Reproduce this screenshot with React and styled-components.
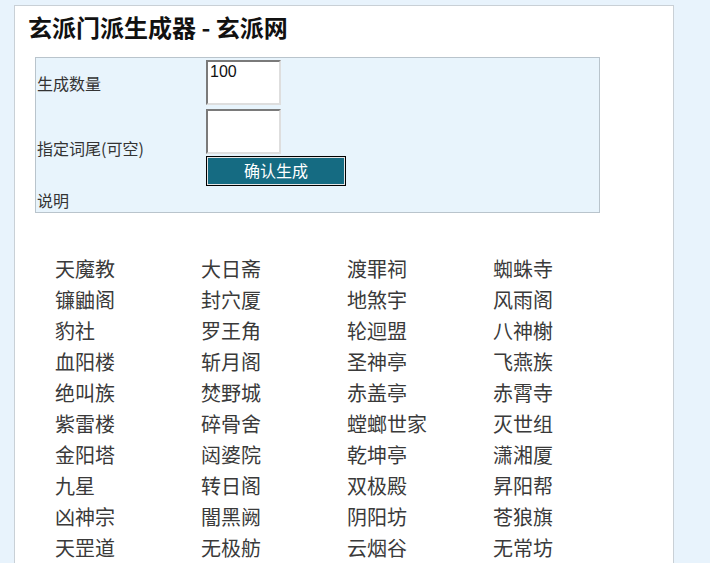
import React from "react";
import styled, { createGlobalStyle } from "styled-components";

const names = [
  "天魔教", "大日斋", "渡罪祠", "蜘蛛寺",
  "镰鼬阁", "封穴厦", "地煞宇", "风雨阁",
  "豹社", "罗王角", "轮迴盟", "八神榭",
  "血阳楼", "斩月阁", "圣神亭", "飞燕族",
  "绝叫族", "焚野城", "赤盖亭", "赤霄寺",
  "紫雷楼", "碎骨舍", "螳螂世家", "灭世组",
  "金阳塔", "闼婆院", "乾坤亭", "潇湘厦",
  "九星", "转日阁", "双极殿", "昇阳帮",
  "凶神宗", "闇黑阙", "阴阳坊", "苍狼旗",
  "天罡道", "无极舫", "云烟谷", "无常坊",
];

const GlobalStyle = createGlobalStyle`
  html, body {
    margin: 0;
    padding: 0;
    background: #e8f3fc;
    font-family: "Noto Sans CJK SC", "Noto Sans", sans-serif;
    color: #333;
  }
`;

const Page = styled.div`
  padding: 5px 0 0 14px;
  height: 563px;
  box-sizing: border-box;
  overflow: hidden;
`;

const Panel = styled.div`
  width: 660px;
  min-height: 600px;
  box-sizing: border-box;
  background: #fff;
  border: 1px solid #c9d0d6;
  padding: 5px 0 0 13px;
`;

const Title = styled.h1`
  margin: 0;
  font-size: 24px;
  line-height: 32px;
  font-weight: 700;
  color: #111;
`;

const FormBox = styled.div`
  margin: 14px 0 0 7px;
  width: 565px;
  box-sizing: border-box;
  background: #e8f4fc;
  border: 1px solid #b9c4cc;
  display: grid;
  grid-template-columns: 169px 1fr;
  align-items: center;
`;

const Label = styled.div`
  padding: 2px 1px;
  font-size: 16px;
  line-height: 20px;
  color: #333;
`;

const Cell = styled.div`
  padding: 2px 1px;
  display: flex;
  flex-direction: column;
  align-items: flex-start;
`;

const Field = styled.textarea`
  width: 75px;
  height: 45px;
  box-sizing: border-box;
  margin: 0;
  padding: 1px 2px;
  resize: none;
  background: #fff;
  border: 2px solid;
  border-color: #7a7a7a #dedede #dedede #7a7a7a;
  font-family: "Liberation Sans", Arial, sans-serif;
  font-size: 16px;
  line-height: 18px;
  color: #111;
  outline: none;
`;

const Submit = styled.button`
  margin-top: 2px;
  width: 140px;
  height: 30px;
  box-sizing: border-box;
  background: #156b82;
  border: 1px solid #000;
  box-shadow: inset 0 0 0 1px #e6e6e6;
  color: #fff;
  font-family: "Noto Sans CJK SC", sans-serif;
  font-size: 16px;
  line-height: 20px;
  padding: 0 0 2px;
  cursor: pointer;
`;

const NameGrid = styled.div`
  margin: 40px 0 0 27px;
  display: grid;
  grid-template-columns: repeat(4, 146px);
`;

const Name = styled.div`
  font-size: 20px;
  line-height: 31px;
  color: #3a3a3a;
  white-space: nowrap;
`;

export default function App() {
  return (
    <>
      <GlobalStyle />
      <Page>
        <Panel>
          <Title>玄派门派生成器 - 玄派网</Title>
          <FormBox>
            <Label>生成数量</Label>
            <Cell>
              <Field defaultValue="100" />
            </Cell>
            <Label>指定词尾(可空)</Label>
            <Cell>
              <Field defaultValue="" />
              <Submit>确认生成</Submit>
            </Cell>
            <Label>说明</Label>
            <Cell />
          </FormBox>
          <NameGrid>
            {names.map((n, i) => (
              <Name key={i}>{n}</Name>
            ))}
          </NameGrid>
        </Panel>
      </Page>
    </>
  );
}
